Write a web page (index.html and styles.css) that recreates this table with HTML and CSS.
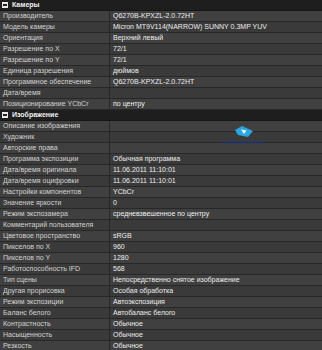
FILE: index.html
```html
<!DOCTYPE html>
<html>
<head>
<meta charset="utf-8">
<link rel="stylesheet" href="styles.css">
</head>
<body>
<div class="grid">
  <div class="head"><span class="box"></span>Камеры</div>
  <div class="row"><div class="k">Производитель</div><div class="v">Q6270B-KPXZL-2.0.72HT</div></div>
  <div class="row"><div class="k">Модель камеры</div><div class="v">Micron MT9V114(NARROW) SUNNY 0.3MP YUV</div></div>
  <div class="row"><div class="k">Ориентация</div><div class="v">Верхний левый</div></div>
  <div class="row"><div class="k">Разрешение по X</div><div class="v">72/1</div></div>
  <div class="row"><div class="k">Разрешение по Y</div><div class="v">72/1</div></div>
  <div class="row"><div class="k">Единица разрешения</div><div class="v">дюймов</div></div>
  <div class="row"><div class="k">Программное обеспечение</div><div class="v">Q6270B-KPXZL-2.0.72HT</div></div>
  <div class="row"><div class="k">Дата/время</div><div class="v"></div></div>
  <div class="row"><div class="k">Позиционирование YCbCr</div><div class="v">по центру</div></div>
  <div class="head"><span class="box"></span>Изображение</div>
  <div class="row"><div class="k">Описание изображения</div><div class="v"></div></div>
  <div class="row"><div class="k">Художник</div><div class="v"></div></div>
  <div class="row"><div class="k">Авторские права</div><div class="v"></div></div>
  <div class="row"><div class="k">Программа экспозиции</div><div class="v">Обычная программа</div></div>
  <div class="row"><div class="k">Дата/время оригинала</div><div class="v">11.06.2011 11:10:01</div></div>
  <div class="row"><div class="k">Дата/время оцифровки</div><div class="v">11.06.2011 11:10:01</div></div>
  <div class="row"><div class="k">Настройки компонентов</div><div class="v">YCbCr</div></div>
  <div class="row"><div class="k">Значение яркости</div><div class="v">0</div></div>
  <div class="row"><div class="k">Режим экспозамера</div><div class="v">средневзвешенное по центру</div></div>
  <div class="row"><div class="k">Комментарий пользователя</div><div class="v"></div></div>
  <div class="row"><div class="k">Цветовое пространство</div><div class="v">sRGB</div></div>
  <div class="row"><div class="k">Пикселов по X</div><div class="v">960</div></div>
  <div class="row"><div class="k">Пикселов по Y</div><div class="v">1280</div></div>
  <div class="row"><div class="k">Работоспособность IFD</div><div class="v">568</div></div>
  <div class="row"><div class="k">Тип сцены</div><div class="v">Непосредственно снятое изображение</div></div>
  <div class="row"><div class="k">Другая прорисовка</div><div class="v">Особая обработка</div></div>
  <div class="row"><div class="k">Режим экспозиции</div><div class="v">Автоэкспозиция</div></div>
  <div class="row"><div class="k">Баланс белого</div><div class="v">Автобаланс белого</div></div>
  <div class="row"><div class="k">Контрастность</div><div class="v">Обычное</div></div>
  <div class="row"><div class="k">Насыщенность</div><div class="v">Обычное</div></div>
  <div class="row"><div class="k">Резкость</div><div class="v">Обычное</div></div>
</div>
<div class="mark">
  <svg width="20" height="13" viewBox="0 0 20 13"><path d="M1 5 L8 1 L19 6 L14 12 L4 10 Z" fill="#2aa6e0"/><path d="M7 4.5 L12.5 5.5 L10 9 Z" fill="#fff"/></svg>
  <div class="mark-t">mobile-review.com</div>
</div>
</body>
</html>
```
FILE: styles.css
```css
html, body {
  margin: 0;
  padding: 0;
  background: #2c2c2c;
}
body {
  font-family: "Liberation Sans", Arial, sans-serif;
  font-size: 7px;
  position: relative;
  width: 322px;
  height: 350px;
  overflow: hidden;
}
.grid {
  display: flex;
  flex-direction: column;
}
.head {
  height: 10px;
  line-height: 10px;
  border-bottom: 1px solid #161616;
  background: #1e1e1e;
  color: #f2f2f2;
  font-weight: bold;
  display: flex;
  align-items: center;
  padding-left: 2px;
}
.box {
  width: 6px;
  height: 6px;
  background: #e8e8e8;
  margin-right: 4px;
  position: relative;
}
.box::after {
  content: "";
  position: absolute;
  left: 1px;
  top: 2px;
  width: 4px;
  height: 2px;
  background: #222;
}
.row {
  display: grid;
  grid-template-columns: 110px 1fr;
  height: 10px;
  line-height: 10px;
  border-bottom: 1px solid #282828;
  background: #404040;
}
.row:nth-child(odd) {
  background: #3a3a3a;
}
.k {
  color: #d2d2d2;
  padding-left: 3px;
  border-right: 1px solid #282828;
  white-space: nowrap;
  overflow: hidden;
}
.v {
  color: #ededed;
  padding-left: 3px;
  white-space: nowrap;
  overflow: hidden;
}
.mark {
  position: absolute;
  left: 220px;
  top: 125px;
  width: 48px;
  display: flex;
  flex-direction: column;
  align-items: center;
}
.mark-t {
  font-size: 5px;
  line-height: 5px;
  color: #1c3c90;
  margin-top: 2px;
}
```
